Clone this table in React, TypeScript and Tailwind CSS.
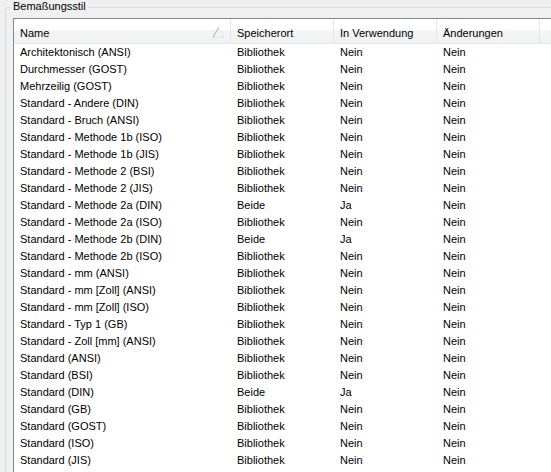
const rows: [string, string, string, string][] = [
  ['Architektonisch (ANSI)', 'Bibliothek', 'Nein', 'Nein'],
  ['Durchmesser (GOST)', 'Bibliothek', 'Nein', 'Nein'],
  ['Mehrzeilig (GOST)', 'Bibliothek', 'Nein', 'Nein'],
  ['Standard - Andere (DIN)', 'Bibliothek', 'Nein', 'Nein'],
  ['Standard - Bruch (ANSI)', 'Bibliothek', 'Nein', 'Nein'],
  ['Standard - Methode 1b (ISO)', 'Bibliothek', 'Nein', 'Nein'],
  ['Standard - Methode 1b (JIS)', 'Bibliothek', 'Nein', 'Nein'],
  ['Standard - Methode 2 (BSI)', 'Bibliothek', 'Nein', 'Nein'],
  ['Standard - Methode 2 (JIS)', 'Bibliothek', 'Nein', 'Nein'],
  ['Standard - Methode 2a (DIN)', 'Beide', 'Ja', 'Nein'],
  ['Standard - Methode 2a (ISO)', 'Bibliothek', 'Nein', 'Nein'],
  ['Standard - Methode 2b (DIN)', 'Beide', 'Ja', 'Nein'],
  ['Standard - Methode 2b (ISO)', 'Bibliothek', 'Nein', 'Nein'],
  ['Standard - mm (ANSI)', 'Bibliothek', 'Nein', 'Nein'],
  ['Standard - mm [Zoll] (ANSI)', 'Bibliothek', 'Nein', 'Nein'],
  ['Standard - mm [Zoll] (ISO)', 'Bibliothek', 'Nein', 'Nein'],
  ['Standard - Typ 1 (GB)', 'Bibliothek', 'Nein', 'Nein'],
  ['Standard - Zoll [mm] (ANSI)', 'Bibliothek', 'Nein', 'Nein'],
  ['Standard (ANSI)', 'Bibliothek', 'Nein', 'Nein'],
  ['Standard (BSI)', 'Bibliothek', 'Nein', 'Nein'],
  ['Standard (DIN)', 'Beide', 'Ja', 'Nein'],
  ['Standard (GB)', 'Bibliothek', 'Nein', 'Nein'],
  ['Standard (GOST)', 'Bibliothek', 'Nein', 'Nein'],
  ['Standard (ISO)', 'Bibliothek', 'Nein', 'Nein'],
  ['Standard (JIS)', 'Bibliothek', 'Nein', 'Nein'],
];

const headers = ['Name', 'Speicherort', 'In Verwendung', 'Änderungen'];

const cols = 'grid grid-cols-[217px_103px_103px_103px_1fr]';

export default function App() {
  return (
    <div className="w-[551px] h-[472px] overflow-hidden bg-[#f0f0f0] font-['Liberation_Sans',Arial,sans-serif] text-[11px] text-black">
      <div className="relative ml-[5px] mt-[7px] h-[480px] border-l border-t border-[#d5dfe5] rounded-tl-[3px] pl-[7px] pt-[10px]">
        <span className="absolute -top-[8px] left-[5px] bg-[#f0f0f0] px-[2px] leading-[13px]">Bemaßungsstil</span>
        <div className="h-full border-l border-t border-[#828790] bg-white">
          <div className={`${cols} h-[25px] border-b border-[#e5e5e5] bg-[linear-gradient(to_bottom,#ffffff_0%,#ffffff_45%,#f4f5f7_46%,#f1f2f4_100%)]`}>
            {headers.map((h, i) => (
              <div key={h} className="relative border-r border-[#e3e6ea] pl-[6px] pt-[8px] leading-[13px]">
                {h}
                {i === 0 && (
                  <svg className="absolute left-[198px] top-[7px]" width="13" height="13" viewBox="0 0 13 13">
                    <path d="M6.5 1.5 L12 11.5 L1 11.5" fill="none" stroke="#e2e4e7" strokeWidth="1" />
                    <path d="M1 11.5 L6.5 1.5" fill="none" stroke="#a9adb3" strokeWidth="1" />
                  </svg>
                )}
              </div>
            ))}
            <div />
          </div>
          {rows.map((r) => (
            <div key={r[0]} className={`${cols} h-[17px] leading-[17px]`}>
              {r.map((c, i) => (
                <div key={i} className="pl-[6px] whitespace-nowrap">
                  {c}
                </div>
              ))}
              <div />
            </div>
          ))}
        </div>
      </div>
    </div>
  );
}
